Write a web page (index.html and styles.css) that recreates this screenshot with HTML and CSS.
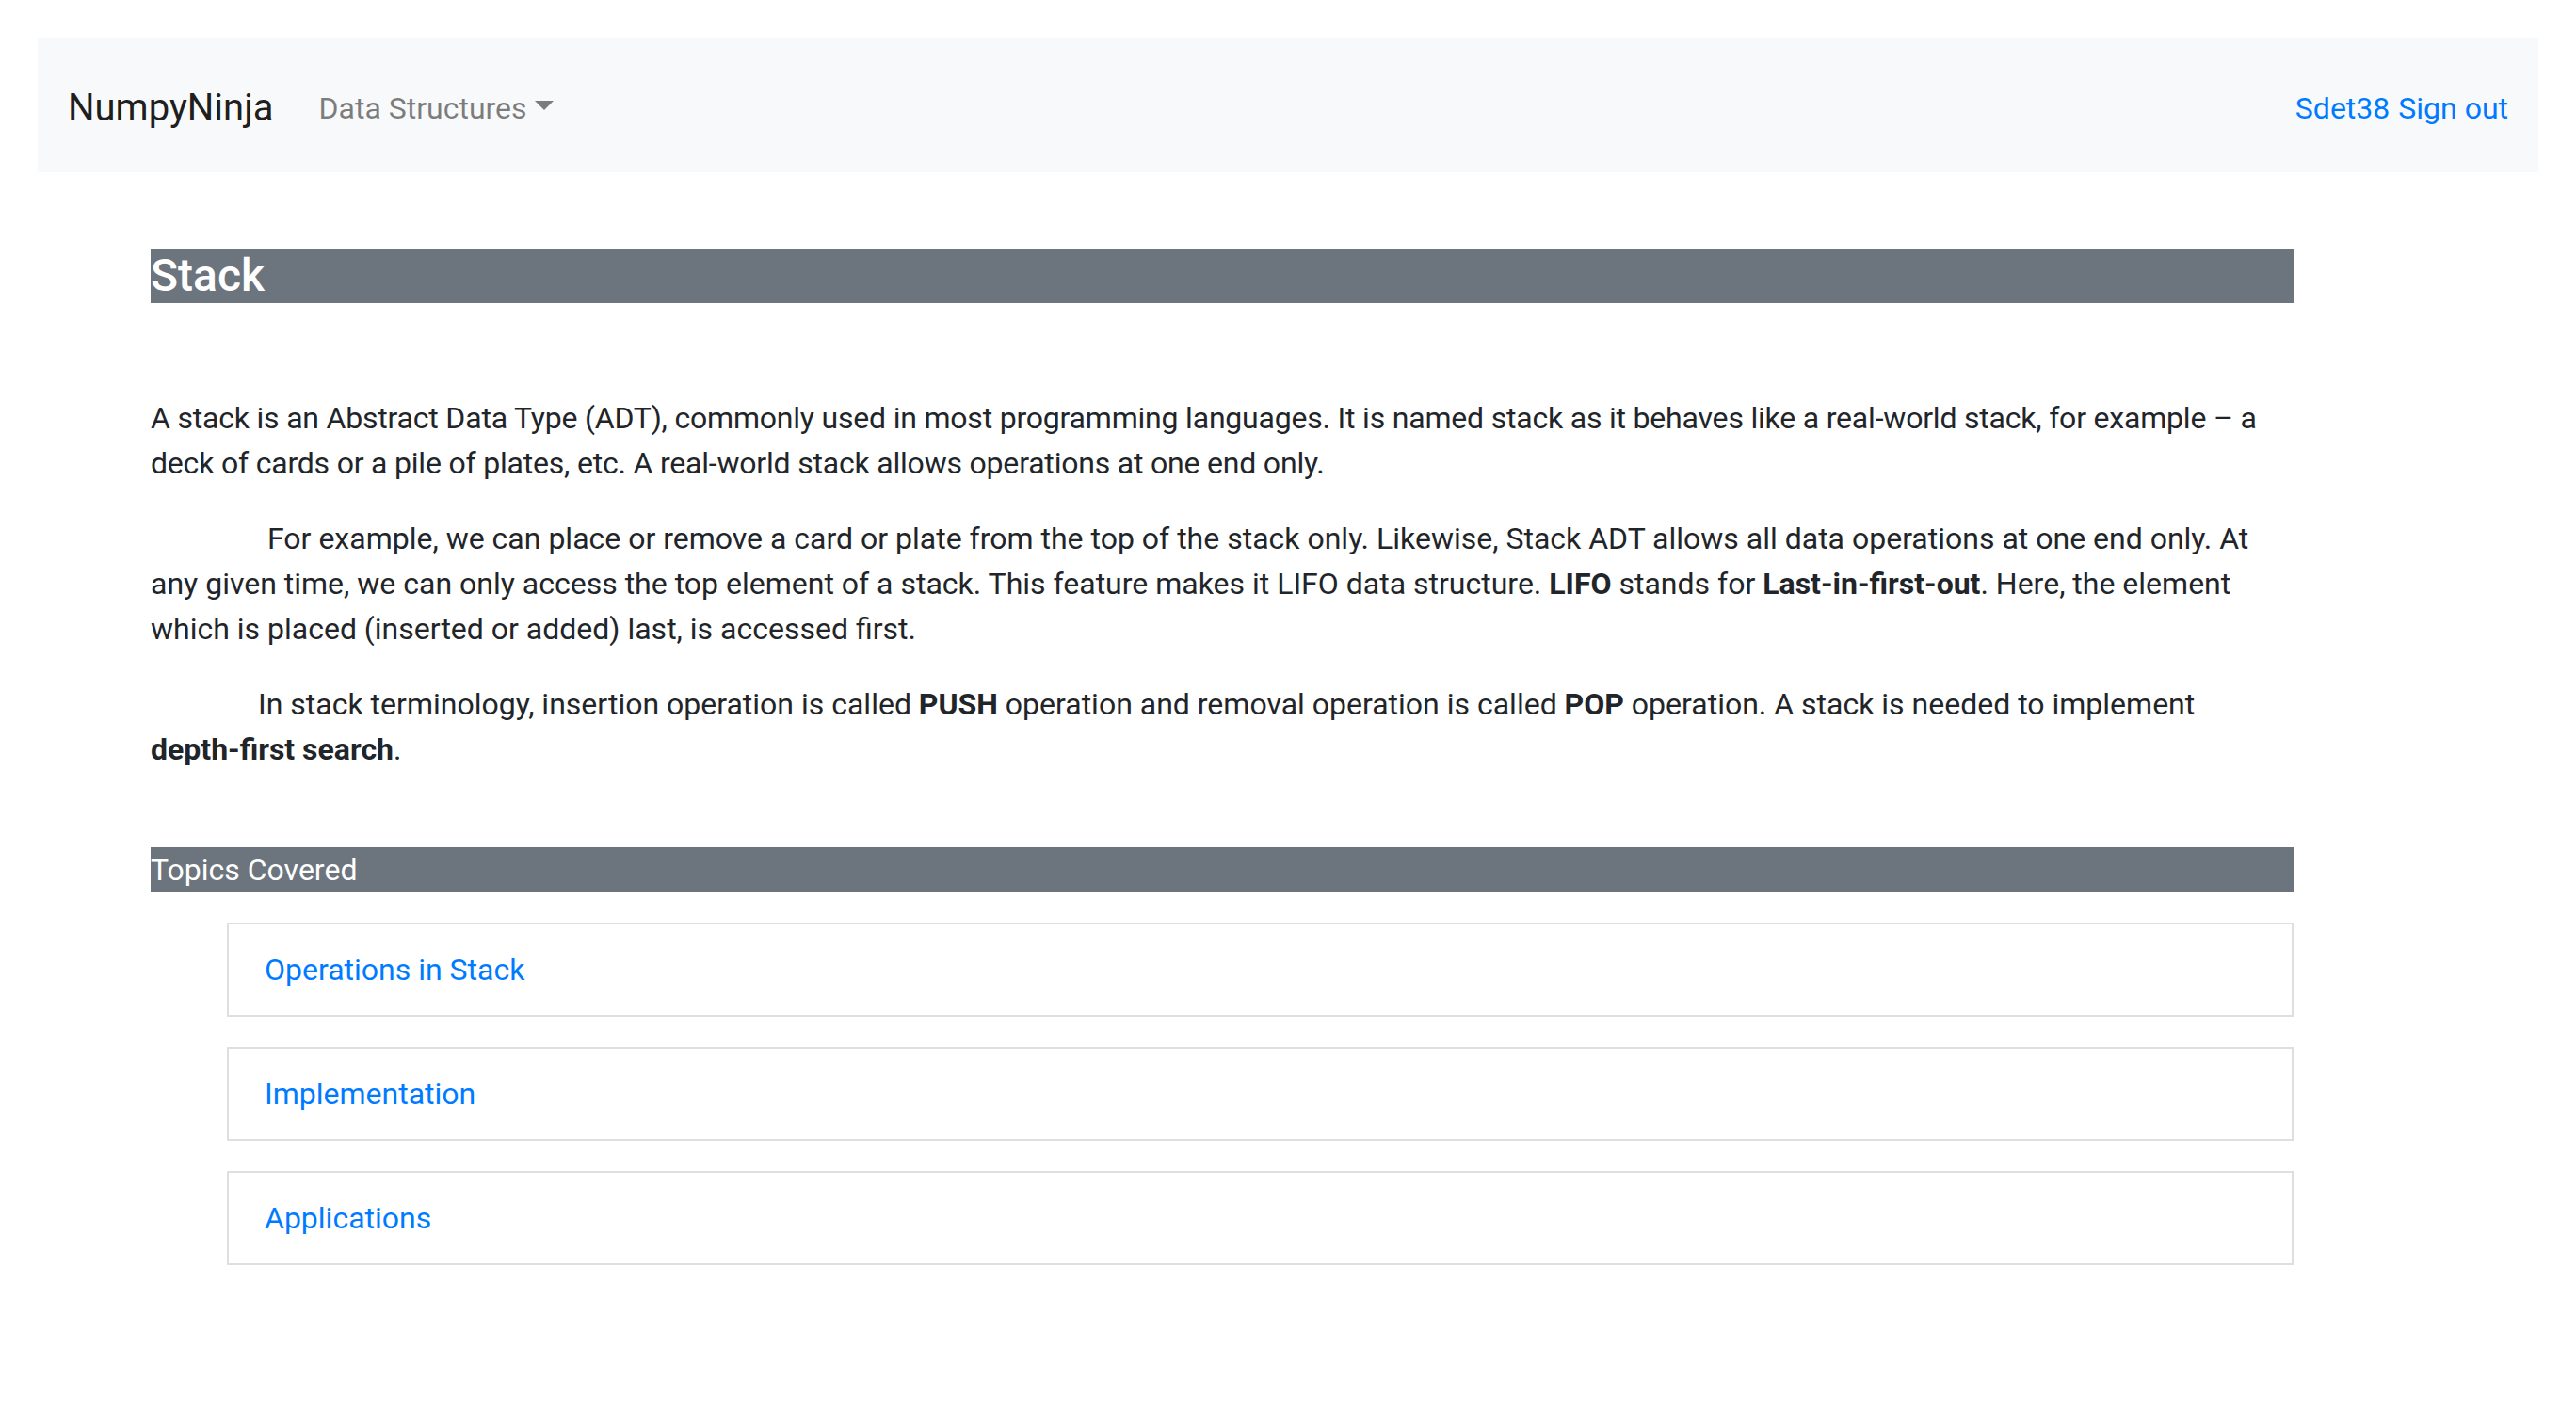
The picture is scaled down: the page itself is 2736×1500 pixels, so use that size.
FILE: index.html
```
<!DOCTYPE html>
<html lang="en">
<head>
<meta charset="utf-8">
<title>Stack</title>
<link rel="stylesheet" href="styles.css">
</head>
<body>
<nav class="navbar">
  <a class="brand" href="#">NumpyNinja</a>
  <a class="nav-drop" href="#">Data Structures<span class="caret"></span></a>
  <div class="nav-right">
    <a class="nav-user" href="#">Sdet38</a>
    <a class="nav-user" href="#">Sign out</a>
  </div>
</nav>
<main class="content">
  <h4 class="title-bar">Stack</h4>
  <p class="para para-first">A stack is an Abstract Data Type (ADT), commonly used in most programming languages. It is named stack as it behaves like a real-world stack, for example – a deck of cards or a pile of plates, etc. A real-world stack allows operations at one end only.</p>
  <p class="para indent-a">For example, we can place or remove a card or plate from the top of the stack only. Likewise, Stack ADT allows all data operations at one end only. At any given time, we can only access the top element of a stack. This feature makes it LIFO data structure. <b>LIFO</b> stands for <b>Last-in-first-out</b>. Here, the element which is placed (inserted or added) last, is accessed first.</p>
  <p class="para indent-b">In stack terminology, insertion operation is called <b>PUSH</b> operation and removal operation is called <b>POP</b> operation. A stack is needed to implement <b class="nowrap">depth-first search</b>.</p>
  <div class="topics-bar">Topics Covered</div>
  <ul class="topic-list">
    <li class="topic-item"><a href="#">Operations in Stack</a></li>
    <li class="topic-item"><a href="#">Implementation</a></li>
    <li class="topic-item"><a href="#">Applications</a></li>
  </ul>
</main>
</body>
</html>
```
FILE: styles.css
```
* { box-sizing: border-box; }
html, body { margin: 0; padding: 0; background: #fff; }
body {
  font-family: Roboto, "Liberation Sans", Arial, sans-serif;
  font-size: 32px;
  line-height: 48px;
  color: #212529;
}
a { text-decoration: none; color: #007bff; }

.navbar {
  margin: 40px 40px 0 40px;
  height: 143px;
  padding: 6px 32px 0 32px;
  background: #f8f9fa;
  display: flex;
  align-items: center;
}
.brand {
  font-size: 40px;
  line-height: 60px;
  color: rgba(0,0,0,.9);
  margin-right: 32px;
}
.nav-drop {
  color: rgba(0,0,0,.5);
  padding: 0 16px;
  display: inline-flex;
  align-items: center;
}
.caret {
  display: inline-block;
  width: 0;
  height: 0;
  margin-left: 8px;
  margin-top: -6px;
  border-top: 10px solid rgba(0,0,0,.5);
  border-left: 10px solid transparent;
  border-right: 10px solid transparent;
}
.nav-right {
  margin-left: auto;
  display: flex;
  gap: 9px;
}

.content {
  margin-left: 160px;
  width: 2276px;
  padding-top: 81px;
}
.title-bar {
  margin: 0;
  font-size: 48px;
  line-height: 58px;
  font-weight: 500;
  color: #fff;
  background: #6c757d;
}
.para { margin: 0 0 32px 0; }
.para-first { margin-top: 98px; letter-spacing: -0.2px; }
.indent-a { text-indent: 124px; }
.indent-b { text-indent: 114px; }
.para b { font-weight: 700; }
.nowrap { white-space: nowrap; }

.topics-bar {
  margin-top: 80px;
  background: #6c757d;
  color: #fff;
  height: 48px;
}
.topic-list {
  list-style: none;
  margin: 32px 0 0 81px;
  padding: 0;
  display: flex;
  flex-direction: column;
  gap: 32px;
}
.topic-item {
  border: 2px solid #dfdfdf;
  padding: 24px 38px;
}
```
